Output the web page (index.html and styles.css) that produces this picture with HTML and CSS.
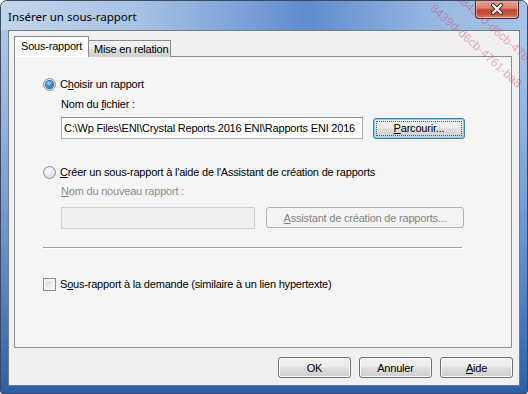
FILE: index.html
```html
<!DOCTYPE html>
<html lang="fr">
<head>
    <meta charset="UTF-8">
    <title>Insérer un sous-rapport</title>
    <link rel="stylesheet" href="styles.css">
</head>
<body>
    <div class="window">
        <div class="titlebar">
            <span class="title">Insérer un sous-rapport</span>
            <div class="close-btn">
                <svg width="18" height="12" viewBox="0 0 18 12">
                    <path d="M5 2 L13 10 M13 2 L5 10" stroke="#3a2a2a" stroke-width="4" stroke-linecap="round"/>
                    <path d="M5 2 L13 10 M13 2 L5 10" stroke="#ffffff" stroke-width="2.2" stroke-linecap="round"/>
                </svg>
            </div>
        </div>

        <div class="client">
            <div class="tabs">
                <div class="tab active">Sous-rapport</div>
                <div class="tab">Mise en relation</div>
            </div>

            <div class="panel">
                <div class="option">
                    <span class="radio checked"></span>
                    <span>C<u>h</u>oisir un rapport</span>
                </div>
                <div class="field-label">Nom du <u>f</u>ichier :</div>
                <div class="field-row">
                    <div class="textbox wide">C:\Wp Files\ENI\Crystal Reports 2016 ENI\Rapports ENI 2016</div>
                    <button class="btn focused"><u>P</u>arcourir...</button>
                </div>

                <div class="option second">
                    <span class="radio"></span>
                    <span><u>C</u>réer un sous-rapport à l'aide de l'Assistant de création de rapports</span>
                </div>
                <div class="field-label disabled"><u>N</u>om du nouveau rapport :</div>
                <div class="field-row low">
                    <div class="textbox narrow disabled"></div>
                    <button class="btn wizard disabled"><u>A</u>ssistant de création de rapports...</button>
                </div>

                <div class="separator"></div>

                <div class="option check-row">
                    <span class="checkbox"></span>
                    <span>S<u>o</u>us-rapport à la demande (similaire à un lien hypertexte)</span>
                </div>
            </div>

            <div class="footer">
                <button class="btn">OK</button>
                <button class="btn">Annuler</button>
                <button class="btn"><u>A</u>ide</button>
            </div>
        </div>

        <div class="watermark">
            <span class="wm-line l1">c8439d-d6cb-4761-b</span>
            <span class="wm-line l2">8439d-d6cb-4761-ba8</span>
        </div>
    </div>
</body>
</html>
```

FILE: styles.css
```css
/* Page */
body {
    margin: 0;
    background: #ffffff;
    font-family: 'Liberation Sans', Arial, sans-serif;
    font-size: 11px;
    letter-spacing: -0.2px;
    color: #000000;
}

u {
    text-decoration: underline;
    text-underline-offset: 1px;
}

/* Window frame */
.window {
    position: relative;
    width: 528px;
    height: 394px;
    box-sizing: border-box;
    border: 1px solid #3c4a5e;
    border-radius: 7px 7px 3px 3px;
    background: linear-gradient(to bottom, #b7cde8 0%, #94b4de 30%, #5d88c6 70%, #2f5ea6 100%);
    overflow: hidden;
    display: flex;
    flex-direction: column;
}

.titlebar {
    height: 29px;
    flex-shrink: 0;
    display: flex;
    align-items: center;
    padding-left: 7px;
    background: linear-gradient(to right, #c3d5ea 0%, #a9c3e4 25%, #7ea3d8 45%, #5f8ccd 58%, #7fa5d9 72%, #9dbbe2 85%, #a7c2e5 100%);
    position: relative;
}

.title {
    font-family: 'Noto Sans', 'Open Sans', sans-serif;
    font-size: 11.5px;
    letter-spacing: 0;
    margin-top: 1px;
    color: #000000;
}

.close-btn {
    position: absolute;
    top: -1px;
    right: 8px;
    width: 44px;
    height: 19px;
    box-sizing: border-box;
    border: 1px solid #4b2620;
    border-top: none;
    border-radius: 0 0 4px 4px;
    background: linear-gradient(to bottom, #e6a99c 0%, #d8806d 45%, #c3442c 55%, #c9553d 80%, #dd8e76 100%);
    box-shadow: inset 0 0 0 1px rgba(255, 210, 200, 0.6);
    display: flex;
    align-items: center;
    justify-content: center;
}

/* Client area */
.client {
    flex: 1;
    margin: 0 7px 7px 7px;
    border: 1px solid #6b7f99;
    background: #f0f0f0;
    display: flex;
    flex-direction: column;
    padding: 6px 7px 0 5px;
}

.tabs {
    display: flex;
    align-items: flex-end;
    height: 20px;
    position: relative;
    z-index: 1;
    margin-bottom: -1px;
}

.tab {
    width: 82px;
    height: 17px;
    line-height: 17px;
    padding-left: 5px;
    box-sizing: border-box;
    border: 1px solid #898c95;
    border-bottom: none;
    border-left: none;
    white-space: nowrap;
    background: linear-gradient(to bottom, #f2f2f2 0%, #ebebeb 45%, #dddddd 55%, #cfcfcf 100%);
}

.tab.active {
    width: 75px;
    height: 21px;
    line-height: 18px;
    padding-left: 6px;
    border-left: 1px solid #898c95;
    background: #ffffff;
}

.panel {
    height: 292px;
    box-sizing: border-box;
    border: 1px solid #898c95;
    background: #f5f5f5;
    padding: 19px 0 0 28px;
    display: flex;
    flex-direction: column;
}

/* Options and fields */
.option {
    display: flex;
    align-items: center;
    height: 16px;
    gap: 4px;
}

.option.second {
    margin-top: 24px;
}

.option.check-row {
    margin-top: 27px;
}

.radio {
    width: 13px;
    height: 13px;
    box-sizing: border-box;
    border: 1px solid #8e8f8f;
    border-radius: 50%;
    background: radial-gradient(circle at 40% 35%, #ffffff 0%, #e6e6e6 50%, #cfcfcf 100%);
    display: flex;
    align-items: center;
    justify-content: center;
}

.radio.checked::after {
    content: "";
    width: 7px;
    height: 7px;
    border-radius: 50%;
    background: radial-gradient(circle at 40% 35%, #a8e0ff 0%, #3e8fd0 45%, #154f87 100%);
    box-shadow: 0 0 0 1px #2d5f8f;
}

.checkbox {
    width: 13px;
    height: 13px;
    box-sizing: border-box;
    border: 1px solid #8e8f8f;
    background: linear-gradient(135deg, #d6d6d6 0%, #f0f0f0 70%, #ffffff 100%);
    box-shadow: inset 0 0 0 2px #f4f4f4;
}

.field-label {
    height: 16px;
    line-height: 16px;
    margin: 4px 0 0 18px;
}

.field-label.disabled {
    margin-top: 3px;
    color: #8d8d8d;
}

.field-row {
    display: flex;
    align-items: center;
    height: 24px;
    margin: 4px 0 0 18px;
    gap: 10px;
}

.field-row.low {
    height: 23px;
    margin-top: 7px;
    gap: 11px;
}

.textbox {
    height: 22px;
    box-sizing: border-box;
    border: 1px solid #abadb3;
    border-top-color: #8e939b;
    background: #ffffff;
    padding: 0 2px;
    line-height: 20px;
    white-space: nowrap;
    overflow: hidden;
    font-size: 11px;
}

.textbox.wide {
    width: 302px;
}

.textbox.narrow {
    width: 194px;
}

.textbox.disabled {
    background: #f0f0f0;
    border-color: #cfcfcf;
}

.separator {
    width: 419px;
    height: 1px;
    margin-top: 18px;
    background: #a0a0a0;
    border-bottom: 1px solid #ffffff;
}

/* Buttons */
.btn {
    width: 73px;
    height: 21px;
    padding: 0;
    border: 1px solid #707070;
    border-radius: 3px;
    background: linear-gradient(to bottom, #f2f2f2 0%, #ebebeb 48%, #dddddd 52%, #cfcfcf 100%);
    box-shadow: inset 0 0 0 1px #fbfbfb;
    font-family: 'Liberation Sans', Arial, sans-serif;
    font-size: 11px;
    letter-spacing: -0.2px;
    color: #000000;
}

.btn.focused {
    width: 92px;
    border-color: #3c7fb1;
    box-shadow: inset 0 0 0 1px #7fd0f5;
    outline: 1px dotted #555555;
    outline-offset: -4px;
}

.btn.wizard {
    width: 198px;
}

.btn.disabled {
    border-color: #adb2b5;
    background: #f4f4f4;
    color: #838383;
    box-shadow: none;
}

.footer {
    display: flex;
    justify-content: flex-end;
    gap: 8px;
    margin-top: 9px;
    margin-right: -1px;
}

/* Watermark overlay */
.watermark {
    position: absolute;
    top: 0;
    left: 0;
    width: 528px;
    height: 394px;
    pointer-events: none;
    overflow: hidden;
}

.wm-line {
    position: absolute;
    font-family: 'Liberation Sans', Arial, sans-serif;
    font-size: 12px;
    letter-spacing: 0;
    color: rgba(214, 50, 90, 0.4);
    transform-origin: 0 0;
    transform: rotate(42deg);
    white-space: nowrap;
}

.wm-line.l1 { left: 462px; top: -10px; }
.wm-line.l2 { left: 436px; top: 0; }
```
